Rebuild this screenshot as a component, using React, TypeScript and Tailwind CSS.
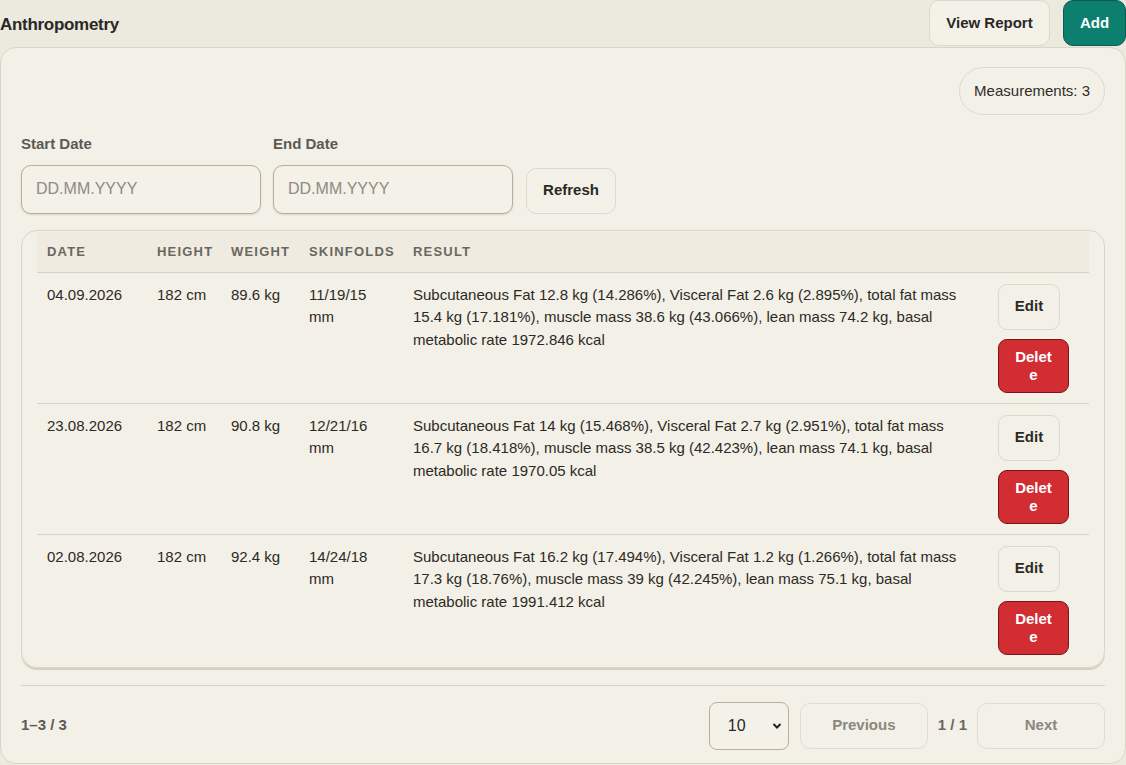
import React from "react";

const rows = [
  { d: "04.09.2026", h: "182 cm", w: "89.6 kg", s: "11/19/15 mm", r: "Subcutaneous Fat 12.8 kg (14.286%), Visceral Fat 2.6 kg (2.895%), total fat mass 15.4 kg (17.181%), muscle mass 38.6 kg (43.066%), lean mass 74.2 kg, basal metabolic rate 1972.846 kcal" },
  { d: "23.08.2026", h: "182 cm", w: "90.8 kg", s: "12/21/16 mm", r: "Subcutaneous Fat 14 kg (15.468%), Visceral Fat 2.7 kg (2.951%), total fat mass 16.7 kg (18.418%), muscle mass 38.5 kg (42.423%), lean mass 74.1 kg, basal metabolic rate 1970.05 kcal" },
  { d: "02.08.2026", h: "182 cm", w: "92.4 kg", s: "14/24/18 mm", r: "Subcutaneous Fat 16.2 kg (17.494%), Visceral Fat 1.2 kg (1.266%), total fat mass 17.3 kg (18.76%), muscle mass 39 kg (42.245%), lean mass 75.1 kg, basal metabolic rate 1991.412 kcal" },
];

export default function App() {
  return (
    <div className="w-[1126px] h-[765px] bg-[#ece9df] text-[#2a2824] overflow-hidden" style={{ fontFamily: '"Liberation Sans", Arial, sans-serif' }}>
      <div className="h-[47px] flex items-start justify-between">
        <h1 className="text-[17px] font-bold mt-[12px] tracking-[-0.3px]">Anthropometry</h1>
        <div className="flex gap-[13px]">
          <button className="w-[121px] h-[46px] rounded-[10px] border border-[#dcd8cb] bg-[#f4f1e8] text-[15px] font-bold">View Report</button>
          <button className="w-[63px] h-[46px] rounded-[10px] border border-[#0b5a4f] bg-[#0d7f6e] text-white text-[15px] font-bold">Add</button>
        </div>
      </div>
      <div className="w-[1126px] h-[717px] rounded-[16px] border border-[#d9d5c8] bg-[#f3f0e7] px-[20px] pt-[19px]">
        <div className="flex justify-end">
          <div className="h-[48px] px-[14px] rounded-full border border-[#ddd9cc] flex items-center text-[15px] text-[#2f2d29]">Measurements: 3</div>
        </div>
        <div className="flex items-end gap-[12px] mt-[18px]">
          {["Start Date", "End Date"].map((l) => (
            <div key={l}>
              <div className="text-[15px] font-bold text-[#5c5a53] mb-[9px]">{l}</div>
              <div className="w-[240px] h-[49px] rounded-[10px] border border-[#b9ae99] bg-[#f4f1e8] shadow-[0_1px_2px_rgba(0,0,0,0.12)] flex items-center px-[14px] text-[16px] text-[#8e8b83]">DD.MM.YYYY</div>
            </div>
          ))}
          <button className="ml-[1px] w-[90px] h-[46px] rounded-[10px] border border-[#ddd9cc] text-[15px] font-bold">Refresh</button>
        </div>
        <div className="mt-[16px] h-[438px] rounded-[16px] border border-[#d9d5c8] shadow-[0_2px_0_#d6d1c2] px-[15px] pt-[1px]">
          <div className="flex h-[41px] items-center bg-[#efebe1] border-b border-[#d6d2c5] text-[13px] font-bold tracking-[1.2px] text-[#6a675f]">
            <div className="w-[110px] pl-[10px]">DATE</div>
            <div className="w-[74px] pl-[10px]">HEIGHT</div>
            <div className="w-[78px] pl-[10px]">WEIGHT</div>
            <div className="w-[104px] pl-[10px]">SKINFOLDS</div>
            <div className="pl-[10px]">RESULT</div>
          </div>
          {rows.map((r, i) => (
            <div key={i} className={`flex h-[131px] text-[15px] leading-[22.5px] text-[#2c2a26] ${i < 2 ? "border-b border-[#d6d2c5]" : ""}`}>
              <div className="w-[110px] pl-[10px] pt-[11px]">{r.d}</div>
              <div className="w-[74px] pl-[10px] pt-[11px]">{r.h}</div>
              <div className="w-[78px] pl-[10px] pt-[11px]">{r.w}</div>
              <div className="w-[104px] pl-[10px] pr-[30px] pt-[11px]">{r.s}</div>
              <div className="w-[584px] pl-[10px] pr-[12px] pt-[11px]">{r.r}</div>
              <div className="pl-[11px] pt-[11px] flex flex-col items-start gap-[9px]">
                <button className="w-[62px] h-[46px] rounded-[9px] border border-[#dcd8cb] text-[15px] font-bold">Edit</button>
                <button className="w-[71px] h-[54px] rounded-[9px] border border-[#7a1419] bg-[#d12d33] text-white text-[15px] font-bold leading-[18px] px-[16px] break-all">Delete</button>
              </div>
            </div>
          ))}
        </div>
        <div className="mt-[17px] border-t border-[#d6d2c5] pt-[16px] flex items-center justify-between">
          <div className="text-[15px] font-bold text-[#5c5a53]">1–3 / 3</div>
          <div className="flex items-center gap-[10px]">
            <div className="w-[80px] h-[48px] rounded-[8px] border border-[#b9ae99] bg-[#f4f1e8] flex items-center justify-between px-[18px] pr-[6px] text-[16px] mr-[1px]">
              <span>10</span>
              <svg width="10" height="8" viewBox="0 0 10 8"><path d="M1.5 2l3.5 3.5L8.5 2" fill="none" stroke="#222" strokeWidth="2" /></svg>
            </div>
            <button className="w-[128px] h-[46px] rounded-[10px] border border-[#e0dccf] text-[15px] font-bold text-[#8a877f]">Previous</button>
            <span className="text-[15px] font-bold text-[#6a675f]">1 / 1</span>
            <button className="w-[128px] h-[46px] rounded-[10px] border border-[#e0dccf] text-[15px] font-bold text-[#8a877f]">Next</button>
          </div>
        </div>
      </div>
    </div>
  );
}
